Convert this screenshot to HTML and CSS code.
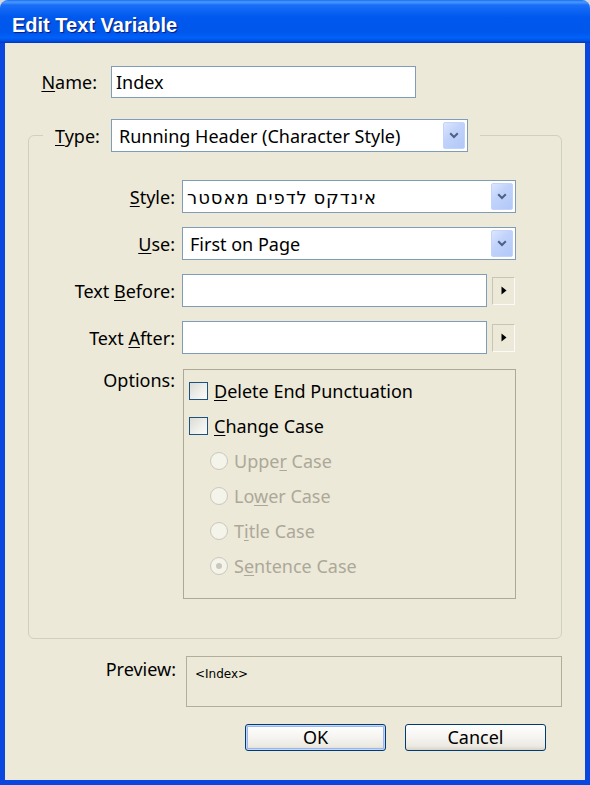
FILE: index.html
```html
<!DOCTYPE html>
<html>
<head>
<meta charset="utf-8">
<title>Edit Text Variable</title>
<link rel="stylesheet" href="styles.css">
</head>
<body>
<div class="window">
  <div class="titlebar"><span class="title">Edit Text Variable</span></div>
  <div class="frame">
    <div class="client">
      <div class="name-row">
        <span class="lbl lbl-name"><u>N</u>ame:</span>
        <div class="textbox name-box">Index</div>
      </div>
      <fieldset class="group">
        <legend class="type-legend">
          <span class="lbl lbl-type"><u>T</u>ype:</span>
          <div class="combo type-combo">
            <span class="combo-text">Running Header (Character Style)</span>
            <span class="combo-btn"><svg width="10" height="7" viewBox="0 0 10 7"><path d="M1.2 1.2 L5 5 L8.8 1.2" fill="none" stroke="#4d6185" stroke-width="2"/></svg></span>
          </div>
        </legend>
        <div class="form">
          <span class="lbl row-lbl"><u>S</u>tyle:</span>
          <div class="combo">
            <span class="combo-text hebrew">אינדקס לדפים מאסטר</span>
            <span class="combo-btn"><svg width="10" height="7" viewBox="0 0 10 7"><path d="M1.2 1.2 L5 5 L8.8 1.2" fill="none" stroke="#4d6185" stroke-width="2"/></svg></span>
          </div>

          <span class="lbl row-lbl"><u>U</u>se:</span>
          <div class="combo">
            <span class="combo-text">First on Page</span>
            <span class="combo-btn"><svg width="10" height="7" viewBox="0 0 10 7"><path d="M1.2 1.2 L5 5 L8.8 1.2" fill="none" stroke="#4d6185" stroke-width="2"/></svg></span>
          </div>

          <span class="lbl row-lbl">Text <u>B</u>efore:</span>
          <div class="field-with-btn">
            <div class="textbox wide-box"></div>
            <span class="arrow-btn"><svg width="6" height="9" viewBox="0 0 6 9"><path d="M0.5 0.5 L5.5 4.5 L0.5 8.5 Z" fill="#000"/></svg></span>
          </div>

          <span class="lbl row-lbl">Text <u>A</u>fter:</span>
          <div class="field-with-btn">
            <div class="textbox wide-box"></div>
            <span class="arrow-btn"><svg width="6" height="9" viewBox="0 0 6 9"><path d="M0.5 0.5 L5.5 4.5 L0.5 8.5 Z" fill="#000"/></svg></span>
          </div>

          <span class="lbl row-lbl opt-lbl">Options:</span>
          <div class="options">
            <div class="opt"><span class="check"></span><span><u>D</u>elete End Punctuation</span></div>
            <div class="opt"><span class="check"></span><span><u>C</u>hange Case</span></div>
            <div class="opt radio-opt disabled"><span class="radio"></span><span>Uppe<u>r</u> Case</span></div>
            <div class="opt radio-opt disabled"><span class="radio"></span><span>Lo<u>w</u>er Case</span></div>
            <div class="opt radio-opt disabled"><span class="radio"></span><span>T<u>i</u>tle Case</span></div>
            <div class="opt radio-opt disabled"><span class="radio checked"></span><span>S<u>e</u>ntence Case</span></div>
          </div>
        </div>
      </fieldset>
      <div class="preview-row">
        <span class="lbl preview-lbl">Preview:</span>
        <div class="preview-box">&lt;Index&gt;</div>
      </div>
      <div class="buttons">
        <button class="btn btn-default">OK</button>
        <button class="btn">Cancel</button>
      </div>
    </div>
  </div>
</div>
</body>
</html>
```
FILE: styles.css
```css
html, body {
  margin: 0;
  padding: 0;
  background: #d8d8d8;
}
.window {
  width: 590px;
  height: 785px;
  display: flex;
  flex-direction: column;
  font-family: "Noto Sans", "DejaVu Sans", sans-serif;
  font-size: 18px;
  line-height: 22px;
  color: #000;
}
.titlebar {
  height: 43px;
  flex: none;
  border-radius: 8px 8px 0 0;
  background: linear-gradient(to bottom, #1c6cf0 0, #4a9bff 2px, #1a6ff8 5px, #0058ee 40%, #0057ec 75%, #0062fa 88%, #004fe2 95%, #0034c4 100%);
  display: flex;
  align-items: center;
  padding-left: 12px;
  box-sizing: border-box;
}
.title {
  color: #fff;
  font-family: "Liberation Sans", Arial, sans-serif;
  font-weight: bold;
  font-size: 20px;
  padding-top: 7px;
  text-shadow: 1px 1px 1px #0a1a80;
}
.frame {
  flex: 1;
  border-style: solid;
  border-color: #0a47df;
  border-width: 0 5px 5px 5px;
  display: flex;
}
.client {
  flex: 1;
  background: #ece9d8;
  display: flex;
  flex-direction: column;
}
.lbl u, .opt u {
  text-decoration: underline;
  text-underline-offset: 2px;
}
.name-row {
  display: flex;
  align-items: center;
  margin-top: 23px;
}
.lbl-name {
  width: 92px;
  text-align: right;
  margin-right: 14px;
}
.textbox {
  box-sizing: border-box;
  border: 1px solid #7f9db9;
  background: #fff;
  height: 32px;
  line-height: 30px;
  padding-left: 4px;
}
.name-box {
  width: 305px;
}
.group {
  margin: 21px 0 0 23px;
  width: 534px;
  box-sizing: border-box;
  border: 1px solid #d0d0bf;
  border-radius: 6px;
  padding: 0 14px 39px 14px;
  min-width: 0;
}
.type-legend {
  padding: 0 12px;
  display: flex;
  align-items: center;
}
.lbl-type {
  width: 56px;
}
.combo {
  box-sizing: border-box;
  height: 33px;
  border: 1px solid #7f9db9;
  background: #fff;
  display: flex;
  align-items: center;
  justify-content: space-between;
}
.type-combo {
  width: 357px;
}
.combo-text {
  padding-left: 7px;
  white-space: nowrap;
}
.hebrew {
  letter-spacing: 1px;
  padding-left: 4px;
}
.combo-btn {
  width: 22px;
  height: 27px;
  margin-right: 2px;
  box-sizing: border-box;
  border: 1px solid #c3d3fd;
  border-radius: 2px;
  background: linear-gradient(135deg, #dce6fd 0%, #c1d3fb 40%, #b3c8f8 100%);
  display: flex;
  align-items: center;
  justify-content: center;
}
.form {
  margin-top: 28px;
  display: grid;
  grid-template-columns: 132px 334px;
  column-gap: 7px;
  row-gap: 14px;
  align-items: center;
}
.row-lbl {
  text-align: right;
}
.opt-lbl {
  align-self: start;
  padding-top: 1px;
}
.field-with-btn {
  display: flex;
  align-items: center;
  height: 33px;
}
.wide-box {
  width: 305px;
  height: 33px;
}
.arrow-btn {
  box-sizing: border-box;
  width: 23px;
  height: 28px;
  margin-left: 5px;
  border: 1px solid;
  border-color: #c8c5b6 #fbfaf6 #fbfaf6 #c8c5b6;
  background: #ece9d8;
  display: flex;
  align-items: center;
  justify-content: center;
}
.options {
  box-sizing: border-box;
  width: 333px;
  height: 230px;
  margin: 1px 0 0 1px;
  border: 1px solid #aca996;
  padding: 3px 5px 0 5px;
}
.opt {
  height: 35px;
  display: flex;
  align-items: center;
  white-space: nowrap;
}
.check {
  box-sizing: border-box;
  width: 19px;
  height: 18px;
  border: 1px solid #1c5180;
  background: linear-gradient(135deg, #dcdcd6 0%, #f0f0ec 60%, #fbfbf9 100%);
  margin-right: 6px;
  flex: none;
}
.radio-opt {
  padding-left: 21px;
}
.disabled {
  color: #aca899;
}
.radio {
  box-sizing: border-box;
  width: 18px;
  height: 18px;
  border-radius: 50%;
  border: 1px solid #cac8bb;
  background: #f5f4ea;
  margin-right: 6px;
  flex: none;
  display: flex;
  align-items: center;
  justify-content: center;
}
.radio.checked::after {
  content: "";
  width: 6px;
  height: 6px;
  border-radius: 50%;
  background: #cac8bb;
}
.preview-row {
  display: flex;
  align-items: flex-start;
  margin-top: 17px;
}
.preview-lbl {
  width: 171px;
  text-align: right;
  margin-right: 10px;
  padding-top: 2px;
}
.preview-box {
  box-sizing: border-box;
  width: 376px;
  height: 51px;
  border: 1px solid #b1ae9b;
  font-family: "DejaVu Sans", sans-serif;
  font-size: 12px;
  line-height: 14px;
  padding: 10px 0 0 8px;
}
.buttons {
  display: flex;
  justify-content: flex-end;
  gap: 19px;
  margin-top: 17px;
  padding-right: 39px;
}
.btn {
  box-sizing: border-box;
  width: 141px;
  height: 27px;
  border: 1px solid #003c74;
  border-radius: 3px;
  background: linear-gradient(to bottom, #ffffff 0%, #f5f4f0 50%, #ebe9e2 85%, #d8d3c7 100%);
  font-family: "Noto Sans", "DejaVu Sans", sans-serif;
  font-size: 18px;
  color: #000;
  padding: 0;
  line-height: 25px;
}
.btn-default {
  box-shadow: inset 0 0 0 1px #c2d6f8, inset 0 0 0 2px #9bb6ee;
}
```
